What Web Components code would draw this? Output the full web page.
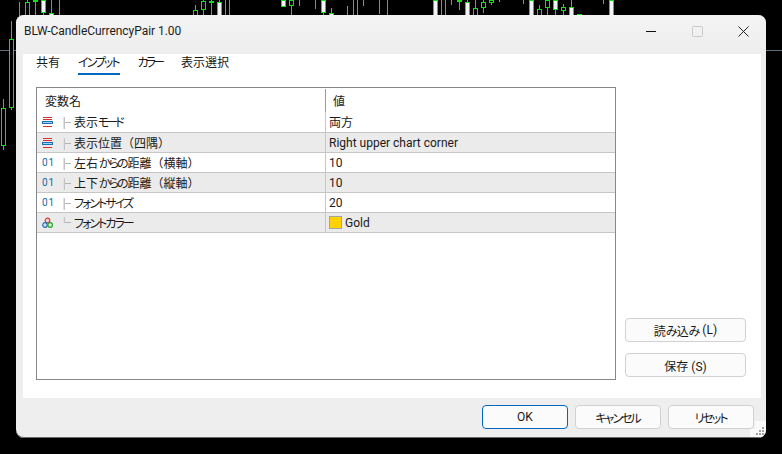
<!DOCTYPE html>
<html lang="ja">
<head>
<meta charset="utf-8">
<title>BLW-CandleCurrencyPair</title>
<style>
html, body { margin:0; background:#000; }
body { font:12px Roboto, "Noto Sans CJK JP", sans-serif; color:#1a1a1a; }
</style>
</head>
<body>
<chart-backdrop>
  <settings-dialog>
    <span slot="title">BLW-CandleCurrencyPair 1.00</span>
    <tab-bar slot="tabs">
      <tab-item>共有</tab-item>
      <tab-item selected><kana-text>インプット</kana-text></tab-item>
      <tab-item><kana-text tight>カラー</kana-text></tab-item>
      <tab-item>表示選択</tab-item>
    </tab-bar>
    <param-table slot="table">
      <param-row kind="enum" label="表示|モード" tight>両方</param-row>
      <param-row kind="enum" label="表示位置（四隅）" alt>Right upper chart corner</param-row>
      <param-row kind="int" label="左右|からの|距離（横軸）">10</param-row>
      <param-row kind="int" label="上下|からの|距離（縦軸）" alt>10</param-row>
      <param-row kind="int" label="|フォントサイズ">20</param-row>
      <param-row kind="color" label="|フォントカラー" alt last swatch="#ffd200">Gold</param-row>
    </param-table>
    <dialog-button slot="side">読<kana-text>み</kana-text>込<kana-text>み</kana-text>&nbsp;(L)</dialog-button>
    <dialog-button slot="side">保存 (S)</dialog-button>
    <dialog-button slot="footer" primary>OK</dialog-button>
    <dialog-button slot="footer"><kana-text>キャンセル</kana-text></dialog-button>
    <dialog-button slot="footer"><kana-text>リセット</kana-text></dialog-button>
  </settings-dialog>
</chart-backdrop>

<script>
// x, wick top, wick bottom, body top, body bottom, body kind
const CANDLES = [
  [3,99,150,108,146,'h'], [11,21,110,39,108,'h'], [19,2,20],
  [27,0,20,2,20,'h'], [35,0,20,0,2,'h'], [43,0,15,0,13,'w'], [51,0,20,13,20,'w'], [59,0,20],
  [195,5,20,10,20,'h'], [203,0,20,1,10,'h'], [211,0,20,1,3,'g'], [219,0,20,2,20,'w'], [225,0,20], [229,0,20],
  [283,0,7,0,7,'w'], [291,0,20,0,6,'h'], [299,0,6], [315,0,9], [323,0,15,0,13,'w'], [331,8,20,13,20,'w'],
  [347,6,20], [353,0,20], [357,0,20], [363,0,6], [379,0,14,0,1,'g'], [387,0,20,0,1,'g'],
  [435,0,20,0,20,'w'], [441,0,20], [445,0,20], [451,0,5], [459,0,10,0,2,'w'], [467,0,20,2,20,'w'],
  [475,0,20,8,20,'h'], [483,0,13,2,8,'h'], [491,0,5,0,3,'h'], [499,0,2], [523,0,4],
  [531,0,20,0,20,'w'], [539,5,20,9,20,'h'], [547,0,20,0,8,'h'], [555,0,16,0,10,'w'], [563,4,20,7,11,'h'],
  [571,0,20,7,20,'w'], [579,14,20,14,20,'h'], [603,0,4], [611,0,20,0,20,'w']
];

const GREEN = '#0fe30f';

function candleSvg() {
  return CANDLES.map(([x, wt, wb, bt, bb, kind]) => {
    let s = `<rect x="${x}" y="${wt}" width="1" height="${wb - wt}" fill="${GREEN}"/>`;
    if (kind) {
      const fill = kind == 'w' ? '#f2f2f2' : kind == 'g' ? GREEN : '#000';
      s += `<rect x="${x - 1.5}" y="${bt + .5}" width="4" height="${bb - bt - 1}" fill="${fill}" stroke="${GREEN}"/>`;
    }
    return s;
  }).join('');
}

customElements.define('chart-backdrop', class extends HTMLElement {
  constructor() {
    super();
    this.attachShadow({ mode: 'open' }).innerHTML = `
    <style>
    :host { display:block; position:relative; width:782px; height:454px; background:#000; overflow:hidden; }
    svg { position:absolute; inset:0; }
    </style>
    <svg width="782" height="454" shape-rendering="crispEdges">
      <rect x="0" y="50" width="782" height="1" fill="#62707e"/>
      ${candleSvg()}
    </svg>
    <slot></slot>`;
  }
});

customElements.define('kana-text', class extends HTMLElement {
  constructor() {
    super();
    this.attachShadow({ mode: 'open' }).innerHTML = `
    <style>
    :host { display:inline; font-feature-settings:"palt"; letter-spacing:-2px; margin:0 1px 0 0; }
    :host([tight]) { letter-spacing:-3px; }
    </style><slot></slot>`;
  }
});

customElements.define('settings-dialog', class extends HTMLElement {
  constructor() {
    super();
    this.attachShadow({ mode: 'open' }).innerHTML = `
    <style>
    :host {
      position:absolute; left:16px; top:15px; width:750px; height:423px; box-sizing:border-box;
      display:flex; flex-direction:column;
      background:#eee; border-radius:8px; overflow:hidden;
      box-shadow:inset 0 1px 0 #5c5c5c, inset 0 -1px 0 #6a6a6a;
    }
    header {
      height:39px; box-sizing:border-box; flex:none; display:flex; align-items:center; padding:0 0 7px 8px;
      background:linear-gradient(#f3f3f3, #eeeeee);
      font-size:12px; letter-spacing:-.05px; color:#1c1c1c;
    }
    header > div { flex:1; }
    nav { display:flex; flex:none; }
    nav span { width:46px; height:30px; display:flex; align-items:center; justify-content:center; }
    main {
      flex:1; display:grid; grid-template-columns:580px 121px; grid-template-rows:auto 1fr;
      column-gap:9px; margin:0 5px 0 7px; padding:0 0 18px 13px; background:#fff;
    }
    .tabs { grid-column:1 / 3; height:33px; }
    .side { display:flex; flex-direction:column; justify-content:flex-end; gap:11px; padding-bottom:3px; }
    footer { height:40px; flex:none; box-sizing:border-box; display:flex; justify-content:flex-end; gap:7px; padding:7px 12px 0 0; }
    svg { display:block; }
    .grip { position:absolute; right:0; bottom:1px; }
    </style>
    <header>
      <div><slot name="title"></slot></div>
      <nav>
        <span><svg width="10" height="10" shape-rendering="crispEdges"><rect y="5" width="10" height="1" fill="#111"/></svg></span>
        <span><svg width="11" height="11"><rect x=".5" y=".5" width="10" height="10" rx="1" fill="none" stroke="#c9c9c9"/></svg></span>
        <span><svg width="11" height="11"><path d="M.5 .5 10.5 10.5 M10.5 .5 .5 10.5" stroke="#222" fill="none"/></svg></span>
      </nav>
    </header>
    <main>
      <div class="tabs"><slot name="tabs"></slot></div>
      <slot name="table"></slot>
      <div class="side"><slot name="side"></slot></div>
    </main>
    <footer><slot name="footer"></slot></footer>
    <svg class="grip" width="16" height="16" shape-rendering="crispEdges">
      <path d="M16 0V16H0V8H5V0Z" fill="#fafafa"/>
      <g fill="#a2a2a2">
        <rect x="12" y="6" width="2" height="2"/>
        <rect x="9" y="9" width="2" height="2"/><rect x="12" y="9" width="2" height="2"/>
        <rect x="6" y="12" width="2" height="2"/><rect x="9" y="12" width="2" height="2"/><rect x="12" y="12" width="2" height="2"/>
      </g>
    </svg>`;
  }
});

customElements.define('tab-bar', class extends HTMLElement {
  constructor() {
    super();
    this.attachShadow({ mode: 'open' }).innerHTML = `
    <style>
    :host { display:flex; gap:18px; }
    </style><slot></slot>`;
  }
});

customElements.define('tab-item', class extends HTMLElement {
  constructor() {
    super();
    this.attachShadow({ mode: 'open' }).innerHTML = `
    <style>
    :host { display:block; height:21px; box-sizing:border-box; line-height:18px; border-bottom:2px solid transparent; color:#1a1a1a; }
    :host([selected]) { border-bottom-color:#0067c0; }
    </style><slot></slot>`;
  }
});

customElements.define('param-table', class extends HTMLElement {
  constructor() {
    super();
    this.attachShadow({ mode: 'open' }).innerHTML = `
    <style>
    :host { display:block; box-sizing:border-box; height:293px; border:1px solid #88888c; background:#fff; }
    .head { display:grid; grid-template-columns:288px 1px 1fr; height:24px; align-items:center; }
    .head i { height:23px; align-self:end; background:#9a9a9a; }
    .head span { padding:1px 0 0 8px; }
    .head i + span { padding-left:7px; }
    </style>
    <div class="head"><span>変数名</span><i></i><span>値</span></div>
    <slot></slot>`;
  }
});

const ROW_ICONS = {
  enum: `<svg width="12" height="12" shape-rendering="crispEdges">
      <rect x="1" y="1" width="9" height="1" fill="#d6322c"/>
      <rect x="1" y="3" width="9" height="1" fill="#d6322c"/>
      <rect x="0" y="5" width="11" height="3" fill="#1a6fb8"/>
      <rect x="1" y="6" width="9" height="1" fill="#a9cdec"/>
      <rect x="1" y="10" width="9" height="1" fill="#d6322c"/>
    </svg>`,
  int: `<b>01</b>`,
  color: `<svg width="12" height="12">
      <circle cx="5.5" cy="3.5" r="2.3" fill="#f7d5d5" stroke="#d0413c" stroke-width="1.2"/>
      <circle cx="3" cy="8" r="2.3" fill="#cfe0f2" stroke="#1f6fb2" stroke-width="1.2"/>
      <circle cx="8.2" cy="8" r="2.3" fill="#d2f0d2" stroke="#2ea52e" stroke-width="1.2"/>
    </svg>`
};

customElements.define('param-row', class extends HTMLElement {
  constructor() {
    super();
    this.attachShadow({ mode: 'open' });
  }
  connectedCallback() {
    // 'a|b|c' splits the label: every second piece is kana and gets the narrow spacing
    const tight = this.hasAttribute('tight') ? ' tight' : '';
    const label = (this.getAttribute('label') || '').split('|')
      .map((p, i) => i % 2 ? `<kana-text${tight}>${p}</kana-text>` : p).join('');
    const sw = this.getAttribute('swatch');
    this.shadowRoot.innerHTML = `
    <style>
    :host { display:grid; grid-template-columns:288px 1px 1fr; height:20px; box-sizing:border-box; border-bottom:1px solid #c6c6c6; align-items:start; background:#fff; }
    :host(:first-child) { height:21px; }
    :host([alt]) { background:#ebebeb; }
    .name { display:flex; align-items:center; height:19px; padding-left:5px; }
    .icon { width:12px; height:12px; margin-top:1px; }
    .icon svg { display:block; }
    b { display:block; font:400 10px/12px Roboto, sans-serif; letter-spacing:.8px; color:#1a66a6; text-align:center; }
    .tree { position:relative; width:7px; height:12px; margin:2px 2px 0 10px; border-left:1px solid #c4c4c4; box-shadow:-1px 0 0 #f5ddc6; }
    .tree::after { content:''; position:absolute; left:0; top:5px; width:6px; height:1px; background:#b4b4b4; }
    :host([last]) .tree { height:6px; margin-top:-6px; }
    i { height:100%; background:#c6c6c6; }
    .val { display:flex; align-items:center; height:19px; gap:3px; padding-left:3px; }
    .sw { width:11px; height:11px; border:1px solid #a3a3a3; }
    </style>
    <div class="name">
      <div class="icon">${ROW_ICONS[this.getAttribute('kind')]}</div>
      <div class="tree"></div>
      <span>${label}</span>
    </div>
    <i></i>
    <div class="val">${sw ? `<span class="sw" style="background:${sw}"></span>` : ''}<span><slot></slot></span></div>`;
  }
});

customElements.define('dialog-button', class extends HTMLElement {
  constructor() {
    super();
    this.attachShadow({ mode: 'open' }).innerHTML = `
    <style>
    :host {
      display:flex; align-items:center; justify-content:center; box-sizing:border-box;
      height:24px; border:1px solid #d1d1d1; border-radius:4px; background:#fbfbfb; color:#1a1a1a;
    }
    :host([slot=footer]) { width:86px; }
    :host([primary]) { border-color:#0067c0; }
    </style><slot></slot>`;
  }
});
</script>
</body>
</html>
